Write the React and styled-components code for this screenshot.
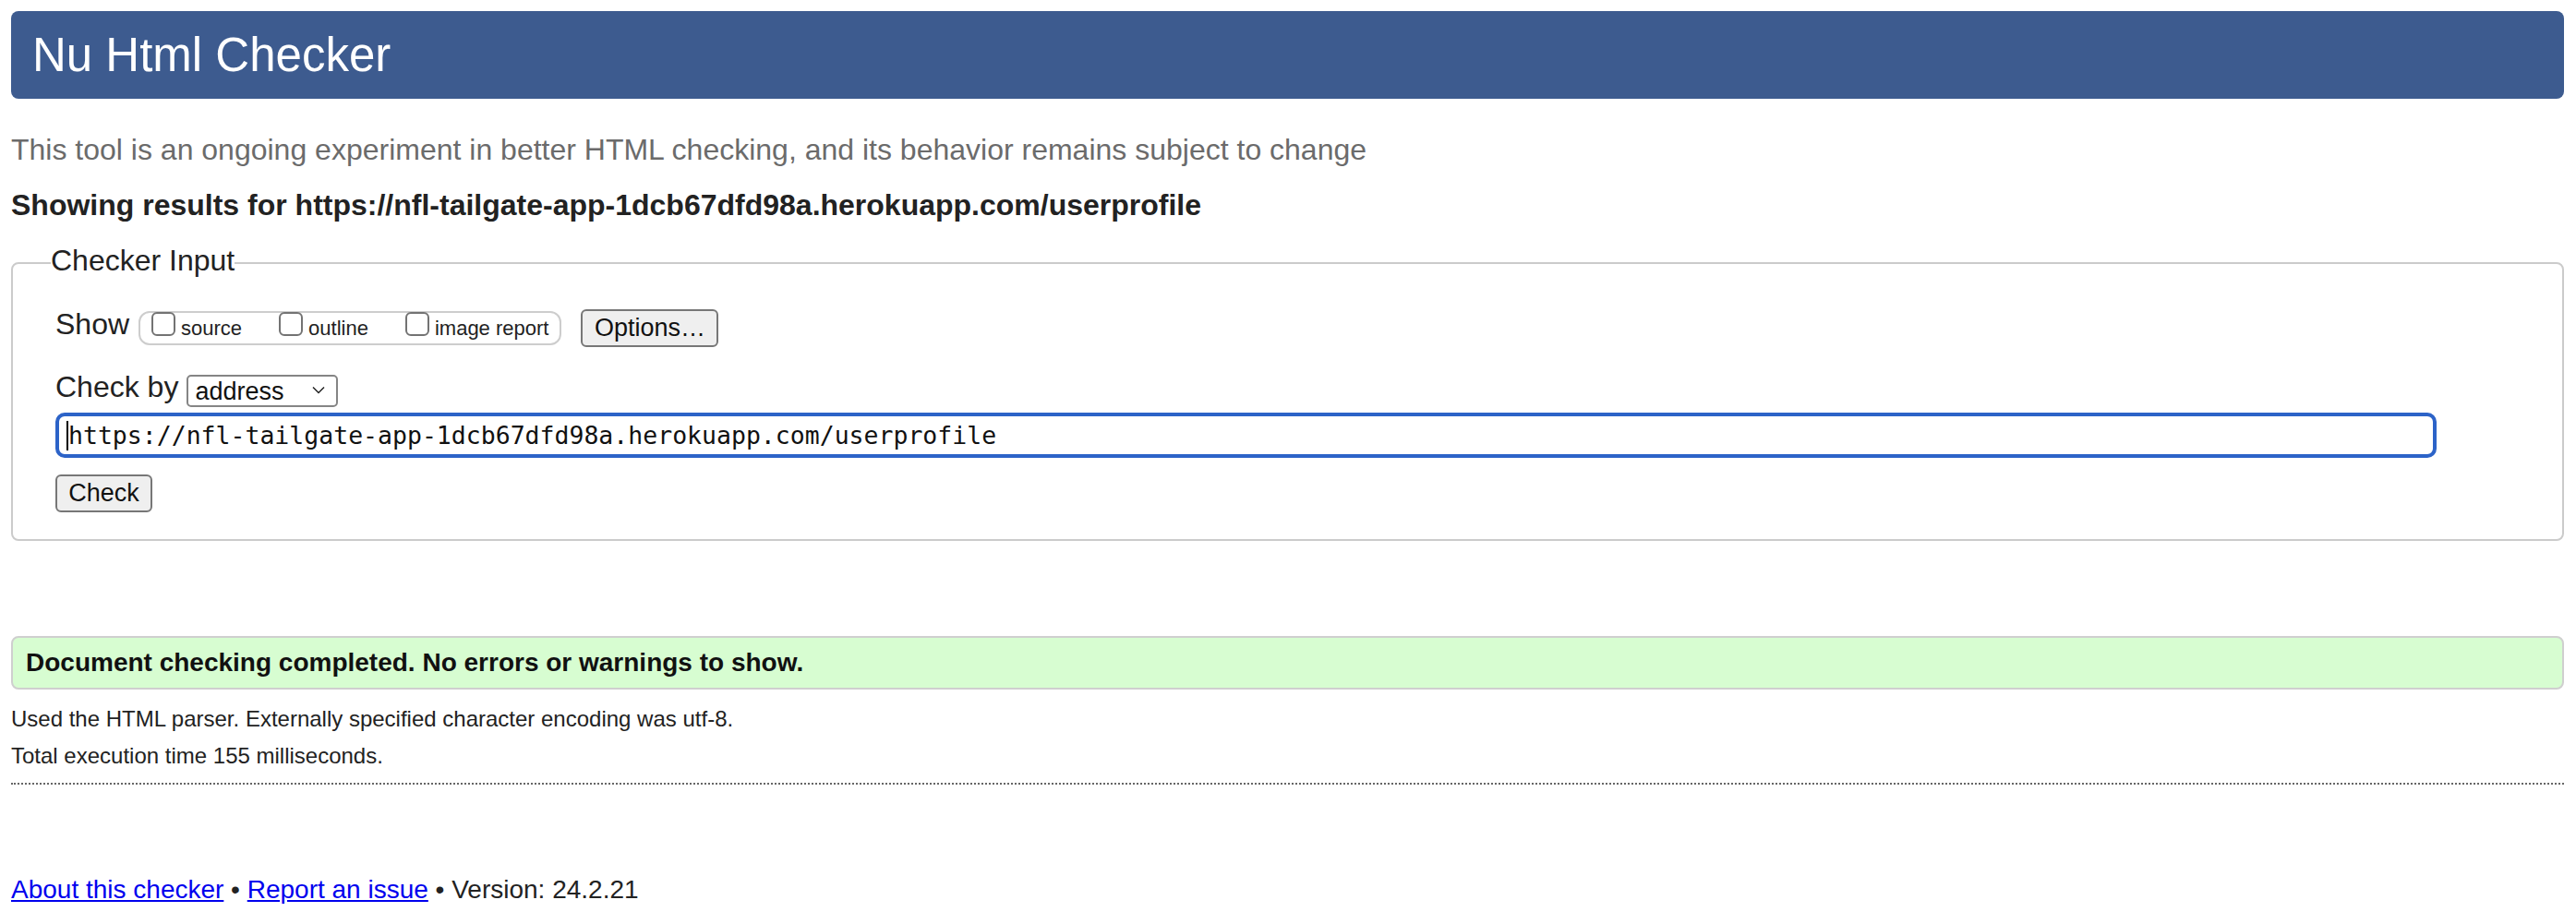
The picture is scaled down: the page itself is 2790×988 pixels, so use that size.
import React from "react";
import styled, { createGlobalStyle } from "styled-components";

const GlobalStyle = createGlobalStyle`
  html, body { margin: 0; padding: 0; background: #fff; }
  body {
    font-family: "Liberation Sans", Arial, Helvetica, sans-serif;
    color: #222;
    overflow: hidden;
  }
`;

const Page = styled.div`
  padding: 12px 13px 0 12px;
`;

const Banner = styled.h1`
  margin: 0;
  height: 95px;
  padding: 0 23px;
  background: #3d5b8f;
  border-radius: 8px;
  color: #fff;
  font-size: 51px;
  font-weight: 400;
  line-height: 95px;
`;

const Intro = styled.p`
  margin: 35px 0 0;
  font-size: 32px;
  line-height: 40px;
  color: #6b6b6b;
`;

const ResultsFor = styled.h2`
  margin: 20px 0 0;
  font-size: 32px;
  line-height: 40px;
  font-weight: 700;
  color: #222;
`;

const InputSet = styled.fieldset`
  margin: 20px 0 0;
  padding: 27px 46px 29px;
  border: 2px solid #cbcbcb;
  border-radius: 8px;
  min-width: 0;
`;

const Legend = styled.legend`
  margin-left: -5px;
  padding: 0 0 6px;
  font-size: 32px;
  line-height: 40px;
  color: #222;
`;

const Row = styled.div`
  display: flex;
  align-items: flex-start;
  margin-top: ${(p) => p.$top || 0}px;
`;

const RowLabel = styled.span`
  font-size: 32px;
  line-height: 36px;
  margin-top: ${(p) => p.$shift}px;
  margin-right: ${(p) => p.$gap}px;
  color: #222;
`;

const ToggleGroup = styled.div`
  display: flex;
  align-items: flex-start;
  gap: 40px;
  height: 37px;
  box-sizing: border-box;
  margin-top: 2px;
  padding: 0 12px;
  border: 2px solid #cdcdcd;
  border-radius: 12px;
`;

const ToggleLabel = styled.label`
  display: flex;
  align-items: flex-start;
  gap: 6px;
  font-size: 22px;
  line-height: 26px;
  color: #222;
`;

const ToggleText = styled.span`
  padding-top: 4px;
`;

const Box = styled.input`
  appearance: none;
  -webkit-appearance: none;
  box-sizing: border-box;
  width: 26px;
  height: 26px;
  margin: -1px 0 0;
  border: 2px solid #737373;
  border-radius: 6px;
  background: #fff;
`;

const PushButton = styled.button`
  box-sizing: border-box;
  height: 41px;
  width: ${(p) => p.$width}px;
  margin-left: ${(p) => p.$left || 0}px;
  margin-top: ${(p) => p.$top || 0}px;
  padding: 0;
  border: 2px solid #777;
  border-radius: 6px;
  background: #efefef;
  color: #111;
  font-family: "Liberation Sans", Arial, Helvetica, sans-serif;
  font-size: 27px;
  line-height: 37px;
`;

const SelectWrap = styled.span`
  position: relative;
  display: inline-flex;
`;

const Select = styled.select`
  appearance: none;
  -webkit-appearance: none;
  box-sizing: border-box;
  width: 164px;
  height: 35px;
  padding: 0 0 0 7px;
  border: 2px solid #858585;
  border-radius: 5px;
  background: #fff;
  color: #111;
  font-family: "Liberation Sans", Arial, Helvetica, sans-serif;
  font-size: 27px;
`;

const Chevron = styled.svg`
  position: absolute;
  right: 14px;
  top: 12px;
  pointer-events: none;
`;

const UrlField = styled.div`
  box-sizing: border-box;
  display: flex;
  align-items: center;
  width: calc(100% - 90px);
  height: 49px;
  margin-top: 6px;
  padding: 0 8px;
  border: 4px solid #2c63c8;
  border-radius: 10px;
  background: #fff;
`;

const Caret = styled.span`
  display: inline-block;
  width: 2px;
  height: 32px;
  background: #000;
`;

const UrlText = styled.span`
  font-family: "DejaVu Sans Mono", "Liberation Mono", monospace;
  font-size: 26.5px;
  line-height: 32px;
  color: #111;
  white-space: pre;
`;

const Notice = styled.p`
  margin: 103px 0 0;
  padding: 7px 14px;
  background: #d7fdd1;
  border: 2px solid #cfcfcf;
  border-radius: 8px;
  font-size: 28px;
  line-height: 40px;
  font-weight: 700;
  color: #111;
`;

const Detail = styled.p`
  margin: ${(p) => p.$top || 0}px 0 0;
  font-size: 24px;
  line-height: 40px;
  color: #222;
`;

const Rule = styled.hr`
  margin: 9px 0 0;
  border: 0;
  border-top: 2px dotted #666;
  height: 0;
`;

const Footer = styled.p`
  margin: 94px 0 0;
  font-size: 28px;
  line-height: 40px;
  color: #222;
`;

const FootLink = styled.a`
  color: #0000ee;
  text-decoration: underline;
`;

export default function App() {
  const url = "https://nfl-tailgate-app-1dcb67dfd98a.herokuapp.com/userprofile";
  return (
    <>
      <GlobalStyle />
      <Page>
        <Banner>Nu Html Checker</Banner>
        <Intro>
          This tool is an ongoing experiment in better HTML checking, and its behavior remains subject to change
        </Intro>
        <ResultsFor>Showing results for {url}</ResultsFor>

        <InputSet>
          <Legend>Checker Input</Legend>
          <Row>
            <RowLabel $shift={-2} $gap={10}>Show</RowLabel>
            <ToggleGroup>
              <ToggleLabel>
                <Box type="checkbox" />
                <ToggleText>source</ToggleText>
              </ToggleLabel>
              <ToggleLabel>
                <Box type="checkbox" />
                <ToggleText>outline</ToggleText>
              </ToggleLabel>
              <ToggleLabel>
                <Box type="checkbox" />
                <ToggleText>image report</ToggleText>
              </ToggleLabel>
            </ToggleGroup>
            <PushButton type="button" $width={149} $left={21}>Options…</PushButton>
          </Row>
          <Row $top={30}>
            <RowLabel $shift={-5} $gap={9}>Check by</RowLabel>
            <SelectWrap>
              <Select defaultValue="address">
                <option value="address">address</option>
                <option value="file">file upload</option>
                <option value="text">text input</option>
              </Select>
              <Chevron width="14" height="9" viewBox="0 0 14 9">
                <path d="M1 1.5 L7 7.5 L13 1.5" fill="none" stroke="#222" strokeWidth="1.5" />
              </Chevron>
            </SelectWrap>
          </Row>
          <UrlField>
            <Caret />
            <UrlText>{url}</UrlText>
          </UrlField>
          <PushButton type="button" $width={105} $top={18}>Check</PushButton>
        </InputSet>

        <Notice>Document checking completed. No errors or warnings to show.</Notice>
        <Detail $top={12}>Used the HTML parser. Externally specified character encoding was utf-8.</Detail>
        <Detail>Total execution time 155 milliseconds.</Detail>
        <Rule />
        <Footer>
          <FootLink href="#about">About this checker</FootLink> • <FootLink href="#issue">Report an issue</FootLink> • Version: 24.2.21
        </Footer>
      </Page>
    </>
  );
}
